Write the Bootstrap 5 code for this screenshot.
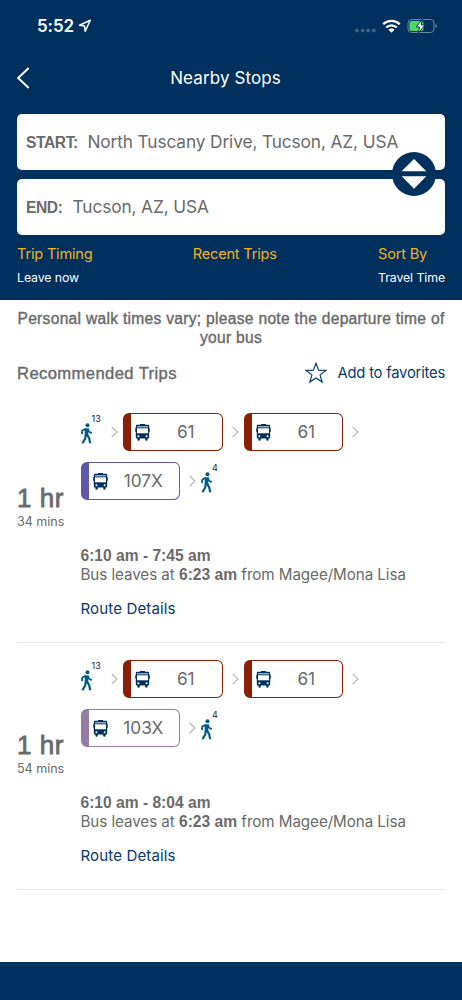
<!DOCTYPE html>
<html lang="en">
<head>
<meta charset="utf-8">
<meta name="viewport" content="width=device-width, initial-scale=1">
<title>Nearby Stops</title>
<link href="https://cdn.jsdelivr.net/npm/bootstrap@5.3.0/dist/css/bootstrap.min.css" rel="stylesheet">
<style>
:root { --navy: #00305e; --ink: #6a6a6a; --link: #073a6b; --gold: #f0b323; }
body { font-family: Inter, "Noto Sans", sans-serif; color: var(--ink); background: #fff; min-height: 1000px; }
svg { display: block; flex: none; }
.helv { font-family: "Liberation Sans", Arial, sans-serif; }
.helv-medium { font-family: "Liberation Sans", Arial, sans-serif; -webkit-text-stroke: .4px currentColor; }
.app-head { background: var(--navy); height: 300px; color: #fff; }
.status-bar { height: 50px; padding: 1px 24px 0 37px; }
.clock { font-size: 17px; font-weight: 600; line-height: 20px; letter-spacing: -.1px; }
.title-bar { height: 64px; padding: 0 28px 9px 17px; }
.title-bar h1 { font-size: 17px; font-weight: 400; line-height: 24px; letter-spacing: .1px; }
.place { height: 56px; border-radius: 5px; background: #fff; color: var(--ink); padding: 0 9px; font-size: 17.3px; letter-spacing: -.12px; }
.place b { font-size: 15.6px; letter-spacing: -.4px; padding-top: 1px; }
.swap { right: -1px; top: 38px; width: 44px; height: 44px; margin-right: 10px; }
.options { color: #fff; font-size: 12.3px; line-height: 20px; letter-spacing: -.07px; padding-top: 7px; }
.options a { display: block; color: var(--gold); font-size: 14.6px; line-height: 24px; letter-spacing: -.2px; margin-bottom: 2px; text-decoration: none; }
.options .recent { margin-left: -1px; }
.notice { font-size: 15.6px; line-height: 18.5px; padding-top: 10px; letter-spacing: .29px; white-space: nowrap; }
.section-head { height: 36px; margin-top: 8px; }
.section-head h2 { font-size: 16.6px; line-height: 24px; letter-spacing: .4px; padding-top: 1px; }
.tlink { color: var(--link); text-decoration: none; font-size: 15.1px; line-height: 20px; letter-spacing: .1px; }
.fav { font-size: 14.8px; letter-spacing: -.22px; }
.trip { height: 247px; border-bottom: 1px solid #e6e6e6; padding-top: 17px; }
.trip.first { margin-top: 5px; }
.total { width: 63.5px; padding-top: 71px; }
.total strong { display: block; font-weight: 400; font-size: 26px; line-height: 28px; letter-spacing: .5px; -webkit-text-stroke-width: .8px; }
.total span { display: block; font-size: 12.6px; line-height: 20px; letter-spacing: -.05px; }
.legs { height: 38px; }
.legs + .legs { margin-top: 11px; }
.walk { width: 21px; height: 24px; position: relative; }
.walk svg { position: absolute; left: 0; bottom: 0; }
.walk sup { position: absolute; left: 11px; top: -5px; font-size: 9px; line-height: 8px; color: #222; }
.chip { width: 99.5px; height: 38px; border: 1.5px solid var(--route); border-left-width: 8px; border-radius: 6px; padding-left: 4px; font-size: 17.3px; }
.chip span { width: 72px; text-align: center; }
.times { font-size: 15.2px; line-height: 19px; margin-top: 46px; white-space: nowrap; }
.times b { font-size: 15.6px; }
.t2 { letter-spacing: -.07px; }
.app-foot { background: var(--navy); height: 38.5px; }
</style>
</head>
<body class="d-flex flex-column">
<svg width="0" height="0" class="position-absolute" aria-hidden="true">
  <symbol id="bus" viewBox="0 0 15 17">
    <path fill="#00305e" d="M5 0h5v.8h3q1.200 0 1.200 1.200v2.300h.6v3.500h-.6v5.500q0 1.200-1.200 1.200h-.4v1q0 1.200-1.200 1.200t-1.200-1.200v-1H4.800v1q0 1.200-1.200 1.200t-1.200-1.200v-1H2q-1.200 0-1.200-1.200V7.800H.2V4.300h.6V2q0-1.200 1.200-1.200h3z"/>
    <path fill="#b9c7d4" d="M2 2.200h11v1.200H2z"/><path fill="#fff" d="M2 4.300h11v5H2z"/>
    <circle cx="3.400" cy="12.200" r="1" fill="#fff"/><circle cx="11.600" cy="12.200" r="1" fill="#fff"/>
  </symbol>
  <symbol id="walker" viewBox="0 0 11 21">
    <circle cx="6.500" cy="2.200" r="2" fill="#005b82"/>
    <path fill="none" stroke="#005b82" stroke-linejoin="round" d="M5.500 5.500v7" stroke-width="3.600"/>
    <path fill="none" stroke="#005b82" stroke-width="1.800" stroke-linejoin="round" d="M5 5.500 1.400 7.500.9 11M6.500 5.500l1.500 3.200 2.700 1.500"/>
    <path fill="none" stroke="#005b82" stroke-width="2.200" stroke-linejoin="round" d="M4.900 11.500 4.200 15.500 1.500 20.300M6 11.500l2.200 3.800 1 5"/>
  </symbol>
  <symbol id="next" viewBox="0 0 7 12"><path d="M.7 1 6 6 .7 11" fill="none" stroke="#b5b5b5" stroke-width="1.100"/></symbol>
</svg>

<header class="app-head">
  <div class="status-bar d-flex align-items-center justify-content-between">
    <div class="d-flex align-items-center"><span class="clock">5:52</span>
      <svg class="ms-1" width="14" height="14" viewBox="0 0 14 14"><path d="M12.300 1.300 1.500 6.200l5 .8.700 5.300z" fill="none" stroke="#fff" stroke-width="1.500" stroke-linejoin="round"/></svg></div>
    <div class="d-flex align-items-center">
      <svg width="21" height="14" viewBox="0 0 21 14" fill="#3f6185"><circle cx="2" cy="11.500" r="1.900"/><circle cx="7.600" cy="11.500" r="1.900"/><circle cx="13.200" cy="11.500" r="1.900"/><circle cx="18.800" cy="11.500" r="1.900"/></svg>
      <svg style="margin-left:6px" width="19" height="14" viewBox="0 0 19 14"><g fill="none" stroke="#fff" stroke-width="2.300"><path d="M1.200 5.300a11.800 11.800 0 0 1 16.600 0"/><path d="M4.300 8.500a7.300 7.300 0 0 1 10.400 0"/></g><path fill="#fff" d="M6.500 10.700a4.200 4.200 0 0 1 6 0l-3 3z"/></svg>
      <svg style="margin-left:6px" width="31" height="16" viewBox="0 0 31 16"><rect x="1" y="1.500" width="26" height="13" rx="3.500" fill="none" stroke="#6d88a3"/><path d="M28.500 6v4q1.500-.5 1.500-2t-1.500-2" fill="#6d88a3"/><rect x="2.500" y="3" width="14" height="10" rx="2" fill="#4cd964"/><path d="M15.500 1 9.200 9h3.600l-1.800 6.500 7-8.500h-3.800z" fill="#fff" stroke="#00305e" stroke-width="1"/></svg>
    </div>
  </div>
  <div class="title-bar position-relative d-flex align-items-center justify-content-center">
    <svg class="position-absolute start-0 ms-3" width="14" height="22" viewBox="0 0 14 22"><path d="M12.700 1 2.200 11l10.500 10" fill="none" stroke="#fff" stroke-width="2"/></svg>
    <h1 class="m-0">Nearby Stops</h1>
  </div>
  <div class="position-relative" style="margin:0 17px">
    <div class="place d-flex align-items-center"><b class="helv">START:</b><span style="margin-left:9.500px">North Tuscany Drive, Tucson, AZ, USA</span></div>
    <div class="place d-flex align-items-center" style="margin-top:9px"><b class="helv">END:</b><span style="margin-left:10px">Tucson, AZ, USA</span></div>
    <svg class="swap position-absolute" viewBox="0 0 44 44"><circle cx="22" cy="22" r="22" fill="#00305e"/><path fill="#fff" d="M22 7l12.300 12.300H9.700zM9.700 24.300h24.600L22 36.700z"/></svg>
    <div class="options d-flex justify-content-between">
      <div><a href="#">Trip Timing</a>Leave now</div>
      <div class="recent"><a href="#">Recent Trips</a></div>
      <div><a href="#">Sort By</a>Travel Time</div>
    </div>
  </div>
</header>

<main class="flex-grow-1" style="padding:0 17px">
  <div class="notice helv-medium text-center">Personal walk times vary; please note the departure time of<br>your bus</div>
  <div class="section-head d-flex align-items-center justify-content-between">
    <h2 class="helv-medium m-0 fw-normal">Recommended Trips</h2>
    <a href="#" class="tlink fav d-flex align-items-center">
      <svg width="22" height="22" viewBox="0 0 22 22" style="margin-right:11px"><path d="M11 1.300l2.600 6.800 7.200.3-5.700 4.500 2 7.100-6.100-4-6.100 4 2-7.100L1.200 8.400l7.200-.3z" fill="none" stroke="#073a6b" stroke-width="1.200"/></svg><span>Add to favorites</span></a>
  </div>

  <section class="trip first d-flex">
    <div class="total"><strong class="helv-medium">1 hr</strong><span>34 mins</span></div>
    <div>
      <div class="legs d-flex align-items-center">
        <div class="walk"><svg width="11" height="21"><use href="#walker"/></svg><sup>13</sup></div>
        <svg style="margin:0 5px 0 9.500px" width="7" height="12"><use href="#next"/></svg>
        <div class="chip d-flex align-items-center" style="--route:#8b1f04"><svg width="15" height="17"><use href="#bus"/></svg><span>61</span></div>
        <svg style="margin:0 5px 0 9px" width="7" height="12"><use href="#next"/></svg>
        <div class="chip d-flex align-items-center" style="--route:#8b1f04"><svg width="15" height="17"><use href="#bus"/></svg><span>61</span></div>
        <svg style="margin:0 5px 0 9px" width="7" height="12"><use href="#next"/></svg>
      </div>
      <div class="legs d-flex align-items-center">
        <div class="chip d-flex align-items-center" style="--route:#5e58a8"><svg width="15" height="17"><use href="#bus"/></svg><span>107X</span></div>
        <svg style="margin:0 5px 0 9px" width="7" height="12"><use href="#next"/></svg>
        <div class="walk"><svg width="11" height="21"><use href="#walker"/></svg><sup>4</sup></div>
      </div>
      <div class="times"><b class="helv t1">6:10 am - 7:45 am</b><br><span class="t2">Bus leaves at</span> <b class="helv">6:23 am</b> <span class="t2">from Magee/Mona Lisa</span></div>
      <a href="#" class="tlink d-inline-block" style="margin-top:15px">Route Details</a>
    </div>
  </section>

  <section class="trip d-flex">
    <div class="total"><strong class="helv-medium">1 hr</strong><span>54 mins</span></div>
    <div>
      <div class="legs d-flex align-items-center">
        <div class="walk"><svg width="11" height="21"><use href="#walker"/></svg><sup>13</sup></div>
        <svg style="margin:0 5px 0 9.500px" width="7" height="12"><use href="#next"/></svg>
        <div class="chip d-flex align-items-center" style="--route:#8b1f04"><svg width="15" height="17"><use href="#bus"/></svg><span>61</span></div>
        <svg style="margin:0 5px 0 9px" width="7" height="12"><use href="#next"/></svg>
        <div class="chip d-flex align-items-center" style="--route:#8b1f04"><svg width="15" height="17"><use href="#bus"/></svg><span>61</span></div>
        <svg style="margin:0 5px 0 9px" width="7" height="12"><use href="#next"/></svg>
      </div>
      <div class="legs d-flex align-items-center">
        <div class="chip d-flex align-items-center" style="--route:#967ba3"><svg width="15" height="17"><use href="#bus"/></svg><span>103X</span></div>
        <svg style="margin:0 5px 0 9px" width="7" height="12"><use href="#next"/></svg>
        <div class="walk"><svg width="11" height="21"><use href="#walker"/></svg><sup>4</sup></div>
      </div>
      <div class="times"><b class="helv t1">6:10 am - 8:04 am</b><br><span class="t2">Bus leaves at</span> <b class="helv">6:23 am</b> <span class="t2">from Magee/Mona Lisa</span></div>
      <a href="#" class="tlink d-inline-block" style="margin-top:15px">Route Details</a>
    </div>
  </section>
</main>
<footer class="app-foot"></footer>
<script src="https://cdn.jsdelivr.net/npm/bootstrap@5.3.0/dist/js/bootstrap.bundle.min.js"></script>
</body>
</html>
